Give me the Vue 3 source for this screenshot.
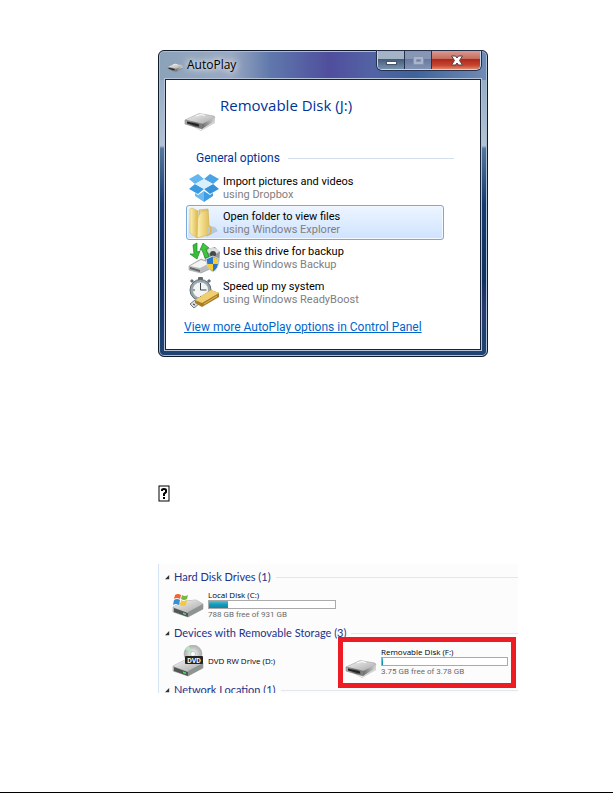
<script setup>
const options = [
  { id: 'dropbox', title: 'Import pictures and videos', using: 'using Dropbox' },
  { id: 'folder', title: 'Open folder to view files', using: 'using Windows Explorer' },
  { id: 'backup', title: 'Use this drive for backup', using: 'using Windows Backup' },
  { id: 'boost', title: 'Speed up my system', using: 'using Windows ReadyBoost' }
]
const selected = 'folder'
</script>

<template>
  <main class="page">
    <svg class="defs" aria-hidden="true">
      <defs>
        <linearGradient id="top" x1="0" y1="0" x2="1" y2="1">
          <stop offset="0" stop-color="#f4f4f4" /><stop offset="1" stop-color="#a8a8a8" />
        </linearGradient>
        <linearGradient id="front" x1="0" y1="0" x2="1" y2="0">
          <stop offset="0" stop-color="#b5b5b5" /><stop offset=".6" stop-color="#4c4c4c" /><stop offset="1" stop-color="#8a8a8a" />
        </linearGradient>
        <linearGradient id="side" x1="0" y1="0" x2="1" y2="0">
          <stop offset="0" stop-color="#6d6d6d" /><stop offset="1" stop-color="#d5d5d5" />
        </linearGradient>
        <linearGradient id="gold" x1="0" y1="0" x2="1" y2="0">
          <stop offset="0" stop-color="#fdf3b4" /><stop offset="1" stop-color="#dcb64b" />
        </linearGradient>
        <radialGradient id="disc">
          <stop offset="0" stop-color="#ffffff" /><stop offset=".5" stop-color="#cfd4d2" /><stop offset="1" stop-color="#a9aeae" />
        </radialGradient>
      </defs>
      <symbol id="drive" viewBox="0 0 32 20">
        <path d="M2 12 L17 19 L31 10 L31 12 L17 20 Z" fill="#000" opacity=".18" />
        <path d="M1 9 L14 3 Q16 2 18 3 L30 5 L31 7 L18 13 Z" fill="url(#top)" stroke="#999" stroke-width=".5" />
        <path d="M1 9 L18 13 L18 18 L1 13 Z" fill="url(#front)" stroke="#777" stroke-width=".5" />
        <path d="M18 13 L31 7 L31 10 L18 18 Z" fill="url(#side)" />
        <path d="M3 10.500 L15 13.500 L15 15.500 L3 12.500 Z" fill="#222" />
        <path d="M12 5 L17 3.500 L21 4.500" fill="none" stroke="#fff" />
      </symbol>
      <symbol id="disk" viewBox="0 0 32 20">
        <path d="M1 8 L13 2 L24 1 L31 5 L31 10 L16 18 L1 13 Z" fill="#bfc2c1" stroke="#8b8f8e" stroke-width=".5" />
        <path d="M1 8 L13 2 L24 1 L31 5 L16 13 Z" fill="url(#top)" />
        <path d="M2 9 L16 14 L16 18 L2 13 Z" fill="#505754" />
        <path d="M16 13 L31 5 L31 10 L16 18 Z" fill="#8e9492" />
        <path d="M11 13.500 L14 14.500 L14 16 L11 15 Z" fill="#4fe06a" />
      </symbol>
    </svg>

    <section class="window" aria-label="AutoPlay">
      <header class="titlebar">
        <svg class="mini" viewBox="0 0 32 20"><use href="#drive" /></svg>
        <span class="caption">AutoPlay</span>
        <div class="controls">
          <button type="button" class="ctl" aria-label="Minimize">
            <svg viewBox="0 0 26 18"><rect x="8.500" y="10.500" width="10" height="3" fill="#fff" stroke="#4a5563" /></svg>
          </button>
          <button type="button" class="ctl dim" aria-label="Maximize" disabled>
            <svg viewBox="0 0 26 18"><path d="M8.500 5.500h10v8h-10z M11.500 8.500h4v2h-4z" fill="#aab4cc" fill-rule="evenodd" stroke="#8794ae" /></svg>
          </button>
          <button type="button" class="ctl close" aria-label="Close">
            <svg viewBox="0 0 48 18"><path d="M19.500 5h4l1.500 2 1.500-2h4l-3 4.500 3 4.500h-4l-1.500-2-1.500 2h-4l3-4.500z" fill="#fff" stroke="#5a4145" /></svg>
          </button>
        </div>
      </header>

      <div class="panel">
        <div class="device">
          <svg class="big" viewBox="0 0 32 20"><use href="#drive" /></svg>
          <h1>Removable Disk (J:)</h1>
        </div>
        <h2 class="group">General options</h2>
        <div class="options">
          <button v-for="o in options" :key="o.id" type="button" class="option" :class="{ selected: o.id === selected }">
            <svg v-if="o.id === 'dropbox'" class="icon" viewBox="0 0 32 32">
              <path d="M10 2 L16 7 L7 12 L1 7Z" fill="#65b5ee" /><path d="M22 2 L31 7 L25 12 L16 7Z" fill="#4ba3e4" />
              <path d="M7 12 L16 17 L10 22 L1 17Z" fill="#3b9ae0" /><path d="M25 12 L31 17 L22 22 L16 17Z" fill="#3792dc" />
              <path d="M16 7 L25 12 L16 17 L7 12Z" fill="#d9effc" />
              <path d="M7 21 L10 23 L16 19 L16 30 L7 24Z" fill="#6dbaf0" /><path d="M25 21 L22 23 L16 19 L16 30 L25 24Z" fill="#3f9de2" />
            </svg>
            <svg v-else-if="o.id === 'folder'" class="icon" viewBox="0 0 32 32">
              <path d="M18 30 L30 24 L27 20 L22 19Z" fill="#8996a8" opacity=".4" />
              <path d="M11 3 L20 2 L20 27 L11 28Z" fill="#e9cc70" stroke="#cba94c" stroke-width=".6" />
              <path d="M12 5 L15 4 L15 26 L12 27Z" fill="#fffdf0" />
              <path d="M11 8 L13 5 L20 3 L21 18 L23 20 L23 27 L9 31 L9 12Z" fill="url(#gold)" stroke="#cfae50" stroke-width=".6" />
              <path d="M2 2 L4 1 L10 4 L9 31 L2 26Z" fill="url(#gold)" stroke="#d5b75e" stroke-width=".6" />
              <path d="M20 20 L22 19 L22 26 L20 27Z" fill="#b5c9cf" />
            </svg>
            <svg v-else-if="o.id === 'backup'" class="icon" viewBox="0 0 32 32">
              <path d="M16 8 L27 5 L32 10 L31 22 L17 20Z" fill="#949898" />
              <ellipse cx="25" cy="9" rx="6" ry="3" fill="#dfe2e2" /><circle cx="25" cy="12" r="3" fill="#454949" />
              <path d="M1 24 L13 17 L23 21 L22 27 L13 31 L1 28Z" fill="#b9bcbc" stroke="#858989" stroke-width=".5" />
              <path d="M2 24 L13 18 L22 21 L12 26Z" fill="#f4f4f4" /><path d="M2 25 L12 28 L12 30 L2 27Z" fill="#646968" />
              <path d="M5 3 L9 1 L9 10 L12 9 L9 17 L2 12 L6 12Z" fill="#39bd38" stroke="#168d22" stroke-width=".7" />
              <path d="M12 8 L15 1 L21 6 L18 7 L21 15 L17 16 L14 8Z" fill="#44c43e" stroke="#168d22" stroke-width=".7" />
              <path d="M18 17 L25 14 L31 17 Q31 27 25 30 Q19 27 18 17Z" fill="#2878cf" stroke="#d6dde2" />
              <path d="M25 15 L30 17 L30 22 L25 22Z M19 22 L25 22 L25 29 Q20 27 19 22Z" fill="#f8cc32" />
            </svg>
            <svg v-else class="icon" viewBox="0 0 32 32">
              <rect x="10" y="0" width="5" height="4" rx="1" fill="#5f6b70" /><path d="M3 5 L5 3 M20 3 L22 5" stroke="#657177" stroke-width="3" />
              <circle cx="12.500" cy="13" r="10.500" fill="#9aa6ab" stroke="#5e6b70" /><circle cx="12.500" cy="13" r="8" fill="#f3f5f5" stroke="#7a878b" stroke-width=".5" />
              <path d="M12.500 6v7h6 M12.500 19v2 M5 13h2" fill="none" stroke="#3c474b" />
              <path d="M2 27 L7 23 L12 26 L6 31Z" fill="#d9dddf" stroke="#73797c" /><path d="M5 27 L7 28" stroke="#333" />
              <path d="M7 23 L23 13 L31 16 L31 20 L14 30 L7 26Z" fill="#ac7d28" />
              <path d="M7 23 L23 13 L31 16 L14 26Z" fill="#f0cf72" /><path d="M16 27 L29 19" stroke="#e0b84c" />
            </svg>
            <span class="words"><span class="title">{{ o.title }}</span><span class="using">{{ o.using }}</span></span>
          </button>
        </div>
        <a class="more" href="#">View more AutoPlay options in Control Panel</a>
      </div>
    </section>

    <div class="missing"><svg viewBox="0 0 12 17"><rect x="1" y="1" width="10" height="15" fill="#fff" stroke="#000" /><path d="M4 6V5q0-1 2-1t2 1v2l-2 2v2" fill="none" stroke="#000" stroke-width="2" /><path d="M5 12h2v2H5z" /></svg></div>

    <section class="explorer" aria-label="Computer">
      <h3><svg viewBox="0 0 6 6"><path d="M5 0v5H0z" /></svg>Hard Disk Drives (1)</h3>
      <div class="row hard">
        <div class="drive">
          <svg class="art" viewBox="0 0 32 32">
            <use href="#disk" y="10" width="32" height="20" />
            <path d="M3 6 Q6 4 9 6 L8 10 Q5 8 2 10Z" fill="#ec6637" /><path d="M10 6 Q13 8 16 6 L15 10 Q12 12 9 10Z" fill="#75b843" />
            <path d="M2 11 Q5 9 8 11 L7 16 Q4 14 1 16Z" fill="#398fd5" /><path d="M9 11 Q12 13 15 11 L14 16 Q11 18 8 16Z" fill="#f6c83b" />
          </svg>
          <div class="info"><span>Local Disk (C:)</span><div class="bar"><i :style="{ width: '15%' }"></i></div><small>788 GB free of 931 GB</small></div>
        </div>
      </div>
      <h3><svg viewBox="0 0 6 6"><path d="M5 0v5H0z" /></svg>Devices with Removable Storage (3)</h3>
      <div class="row removable">
        <div class="drive">
          <svg class="art" viewBox="0 0 32 32">
            <use href="#disk" y="13" width="32" height="20" />
            <ellipse cx="21" cy="9" rx="9" ry="9" fill="url(#disc)" stroke="#a2a5a5" stroke-width=".5" />
            <path d="M21 9 L13 4 L17 1Z" fill="#b9e3c2" /><circle cx="21" cy="9" r="2.500" fill="#fff" stroke="#999" stroke-width=".5" />
            <rect x="13" y="11" width="18" height="8" rx="1" fill="#242424" />
            <text x="22" y="17.500" text-anchor="middle" font-size="7" font-weight="700" fill="#fff">DVD</text>
          </svg>
          <div class="info"><span>DVD RW Drive (D:)</span></div>
        </div>
        <div class="drive marked">
          <svg class="art low" viewBox="0 0 32 20"><use href="#drive" /></svg>
          <div class="info"><span>Removable Disk (F:)</span><div class="bar"><i :style="{ width: '1%' }"></i></div><small>3.75 GB free of 3.78 GB</small></div>
        </div>
      </div>
      <h3><svg viewBox="0 0 6 6"><path d="M5 0v5H0z" /></svg>Network Location (1)</h3>
    </section>
  </main>
</template>

<style>
body { margin: 0; background: #fff; }
</style>

<style scoped>
* { box-sizing: border-box; }
.page { min-height: 100vh; padding: 50px 95px 0 158px; border-bottom: 1px solid #000; font-family: Roboto, "Noto Sans", sans-serif; }
.defs { position: absolute; width: 0; height: 0; }
svg { display: block; flex: none; }
button { font: inherit; cursor: pointer; }
h1, h2, h3 { margin: 0; font-weight: 400; }

.window {
  max-width: 330px; padding: 0 6px 6px; border: 1px solid #101b2d; border-radius: 6px;
  box-shadow: inset 0 0 0 1px #a9bdd3;
  background:
    linear-gradient(180deg, transparent 75%, #4b418955 85%, transparent 95%) right / 8px 100% no-repeat,
    linear-gradient(90deg, #8ba2b8 0, #9aa9c2 22%, #5f78ac 34%, #504e9d 52%, #5363a5 65%, #3e639b 78%, #708bb5 100%) top / 100% 29px no-repeat,
    linear-gradient(180deg, #87a3be 0, #b4c3d3 31%, #55779c 32%, #173a70 50%, #123060 75%, #204575 100%);
}
.titlebar { display: flex; align-items: flex-start; height: 28px; }
.mini { width: 16px; height: 11px; margin: 11px 4px 0 2px; }
.caption { font-family: "Open Sans", sans-serif; font-size: 12px; line-height: 16px; margin-top: 6px; color: #000; text-shadow: 0 0 6px #fff, 0 0 8px #fff; }
.controls { display: flex; margin-left: auto; border: 1px solid #c8d3e3; border-top: 0; border-radius: 0 0 5px 5px; overflow: hidden; box-shadow: 0 0 0 1px #26304a; }
.ctl { display: flex; width: 27px; height: 18px; padding: 0; border: 0; border-right: 1px solid #27334b; background: linear-gradient(#a5b3c7 0 45%, #455b79 46%, #7692b1); }
.ctl svg { width: 100%; height: 18px; }
.dim { background: linear-gradient(#8796b5 0 45%, #68799f 46%, #8193b6); }
.close { width: 48px; border-right: 0; background: linear-gradient(#d99b91 0, #c7695b 45%, #ac281b 46%, #c94531 80%, #dd8868); }

.panel { padding: 15px 26px 13px 18px; border: 1px solid #17253a; background: #fff; box-shadow: 0 0 0 1px #b5c4d8; }
.device { display: flex; gap: 4px; height: 50px; }
.big { width: 32px; height: 20px; margin-top: 16px; }
h1 { font-family: "Open Sans", sans-serif; font-size: 15px; line-height: 20px; color: #039; }
.group { display: flex; align-items: center; gap: 8px; margin-left: 12px; font-size: 12px; line-height: 20px; margin-top: 3px; color: #039; }
.group::after { content: ""; flex: 1; height: 1px; background: #d5dff0; }
.options { display: grid; margin: 2px 10px 0 2px; }
.option { display: flex; align-items: center; gap: 3px; height: 35px; padding: 0 1px; border: 1px solid transparent; border-radius: 3px; background: none; text-align: left; }
.selected { border-color: #7da7db; background: linear-gradient(#edf5ff, #cfe3ff); box-shadow: inset 0 0 0 1px #f3f8ff; }
.icon { width: 32px; height: 32px; }
.words { display: grid; font-size: 11px; line-height: 13px; white-space: nowrap; }
.title { color: #000; }
.using { color: #808080; }
.more { display: block; margin-top: 8px; font-size: 12px; line-height: 18px; white-space: nowrap; color: #06c; }

.missing { padding-top: 128px; }
.missing svg { width: 12px; height: 17px; }

.explorer { height: 129px; margin-top: 62px; padding-top: 3px; overflow: hidden; border-left: 1px solid #d5e5f5; background: #fcfcfc; }
h3 { display: flex; align-items: center; font-family: Lato, sans-serif; font-size: 11px; line-height: 20px; white-space: nowrap; color: #1e3287; }
h3 svg { width: 5px; height: 5px; margin: 0 4px 0 6px; fill: #333; }
h3::after { content: ""; flex: 1; height: 1px; margin-left: 5px; background: #e3e6ea; }
.row { display: grid; grid-template-columns: 179px 1fr; align-items: start; }
.hard { height: 36px; }
.removable { height: 37px; }
.drive { display: flex; align-items: center; gap: 4px; height: 36px; padding: 0 2px 0 13px; }
.art { width: 32px; height: 32px; }
.info { flex: 1; min-width: 0; padding-bottom: 2px; font-size: 8px; line-height: 11px; color: #000; white-space: nowrap; }
.info span, .info small { display: block; }
.info span { font-family: "Open Sans", sans-serif; }
.info small { font-size: 8px; color: #6a6a6a; }
.bar { height: 9px; border: 1px solid #aaa; background: #fff; }
.bar i { display: block; height: 100%; background: linear-gradient(#56bfd6, #159ab8 50%, #1686a6); }
.marked { height: 51px; margin: -6px 2px 0 0; padding: 0 3px 0 2px; border: 5px solid #ed1c24; }
.low { height: 20px; margin-top: 10px; }
</style>
